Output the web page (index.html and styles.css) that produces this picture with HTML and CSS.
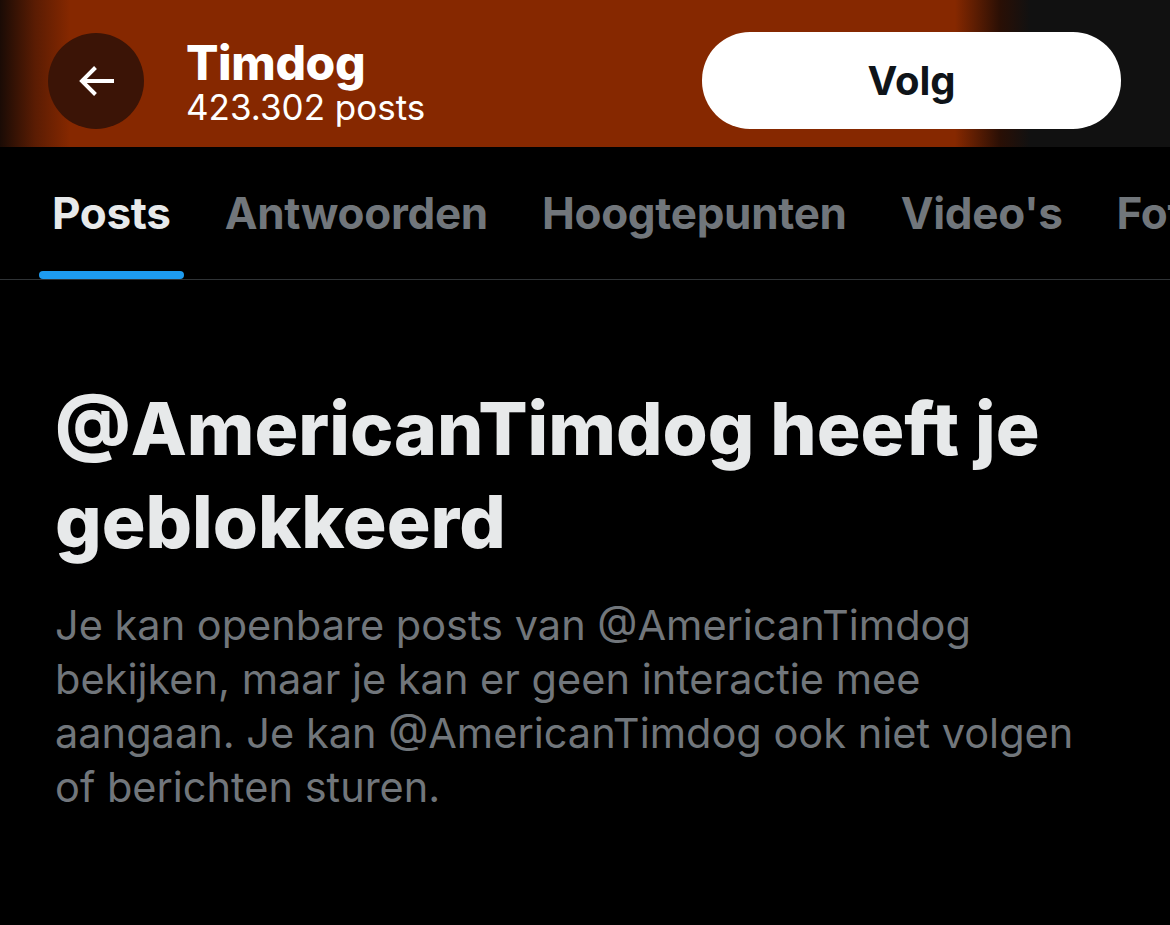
FILE: index.html
```html
<!DOCTYPE html>
<html lang="nl">
<head>
    <meta charset="UTF-8">
    <meta name="viewport" content="width=device-width, initial-scale=1.0">
    <title>Timdog</title>
    <link rel="stylesheet" href="styles.css">
</head>
<body>

    <div class="header">
        <button class="back-btn" aria-label="Terug">
            <svg viewBox="0 0 24 24" width="48" height="48">
                <path d="M7.414 13l5.043 5.04-1.414 1.42L3.586 12l7.457-7.46 1.414 1.42L7.414 11H21v2H7.414z" fill="#fff"/>
            </svg>
        </button>
        <div class="title">
            <h1>Timdog</h1>
            <div class="count">423.302 posts</div>
        </div>
        <button class="follow-btn">Volg</button>
    </div>

    <nav class="tabs">
        <a class="tab active" href="#">Posts</a>
        <a class="tab" href="#">Antwoorden</a>
        <a class="tab" href="#">Hoogtepunten</a>
        <a class="tab" href="#">Video's</a>
        <a class="tab" href="#">Foto's</a>
    </nav>

    <div class="blocked">
        <h2>@AmericanTimdog heeft je geblokkeerd</h2>
        <p>Je kan openbare posts van @AmericanTimdog bekijken, maar je kan er geen interactie mee aangaan. Je kan @AmericanTimdog ook niet volgen of berichten sturen.</p>
    </div>

</body>
</html>
```

FILE: styles.css
```css
body { margin: 0; background: #000; font-family: Inter, "Liberation Sans", sans-serif; color: #e7e9ea; overflow: hidden; }

.header {
    height: 147px; display: flex; align-items: center;
    padding: 14px 48px 0; box-sizing: border-box;
    background: linear-gradient(90deg, #1a0b05 0, #5a1c03 35px, #862800 70px, #862800 955px, #2a0f05 1000px, #111 1030px);
}
.back-btn {
    width: 96px; height: 96px; border-radius: 50%;
    background: #3b1406; border: none; padding: 0;
    display: flex; align-items: center; justify-content: center;
}
.title { margin-left: 42px; flex: 1; }
.title h1 { margin: 0; font-size: 48px; font-weight: 800; color: #fff; line-height: 52px; letter-spacing: -0.4px; }
.title .count { font-size: 35px; color: #fff; line-height: 36px; }
.follow-btn {
    width: 419px; height: 97px; margin-right: 1px;
    background: #fff; color: #0f1419; border: none; border-radius: 48px;
    font-family: inherit; font-size: 40px; font-weight: 700;
}

.tabs {
    display: flex; gap: 54px; padding: 0 52px;
    border-bottom: 1px solid #2f3336; height: 132px; white-space: nowrap;
    overflow: hidden;
}
.tab {
    position: relative; text-decoration: none;
    font-size: 44px; font-weight: 700; color: #71767b;
    line-height: 132px; letter-spacing: -0.3px;
}
.tab.active { color: #e7e9ea; }
.tab.active::after {
    content: ""; position: absolute; left: -13px; right: -13px; bottom: 0;
    height: 8px; border-radius: 4px; background: #1d9bf0;
}

.blocked { padding: 102px 55px 0; }
.blocked h2 { margin: 0; font-size: 73px; font-weight: 800; line-height: 93px; max-width: 1060px; }
.blocked p { margin: 30px 0 0; font-size: 41.5px; line-height: 54px; color: #71767b; max-width: 1035px; }
```
